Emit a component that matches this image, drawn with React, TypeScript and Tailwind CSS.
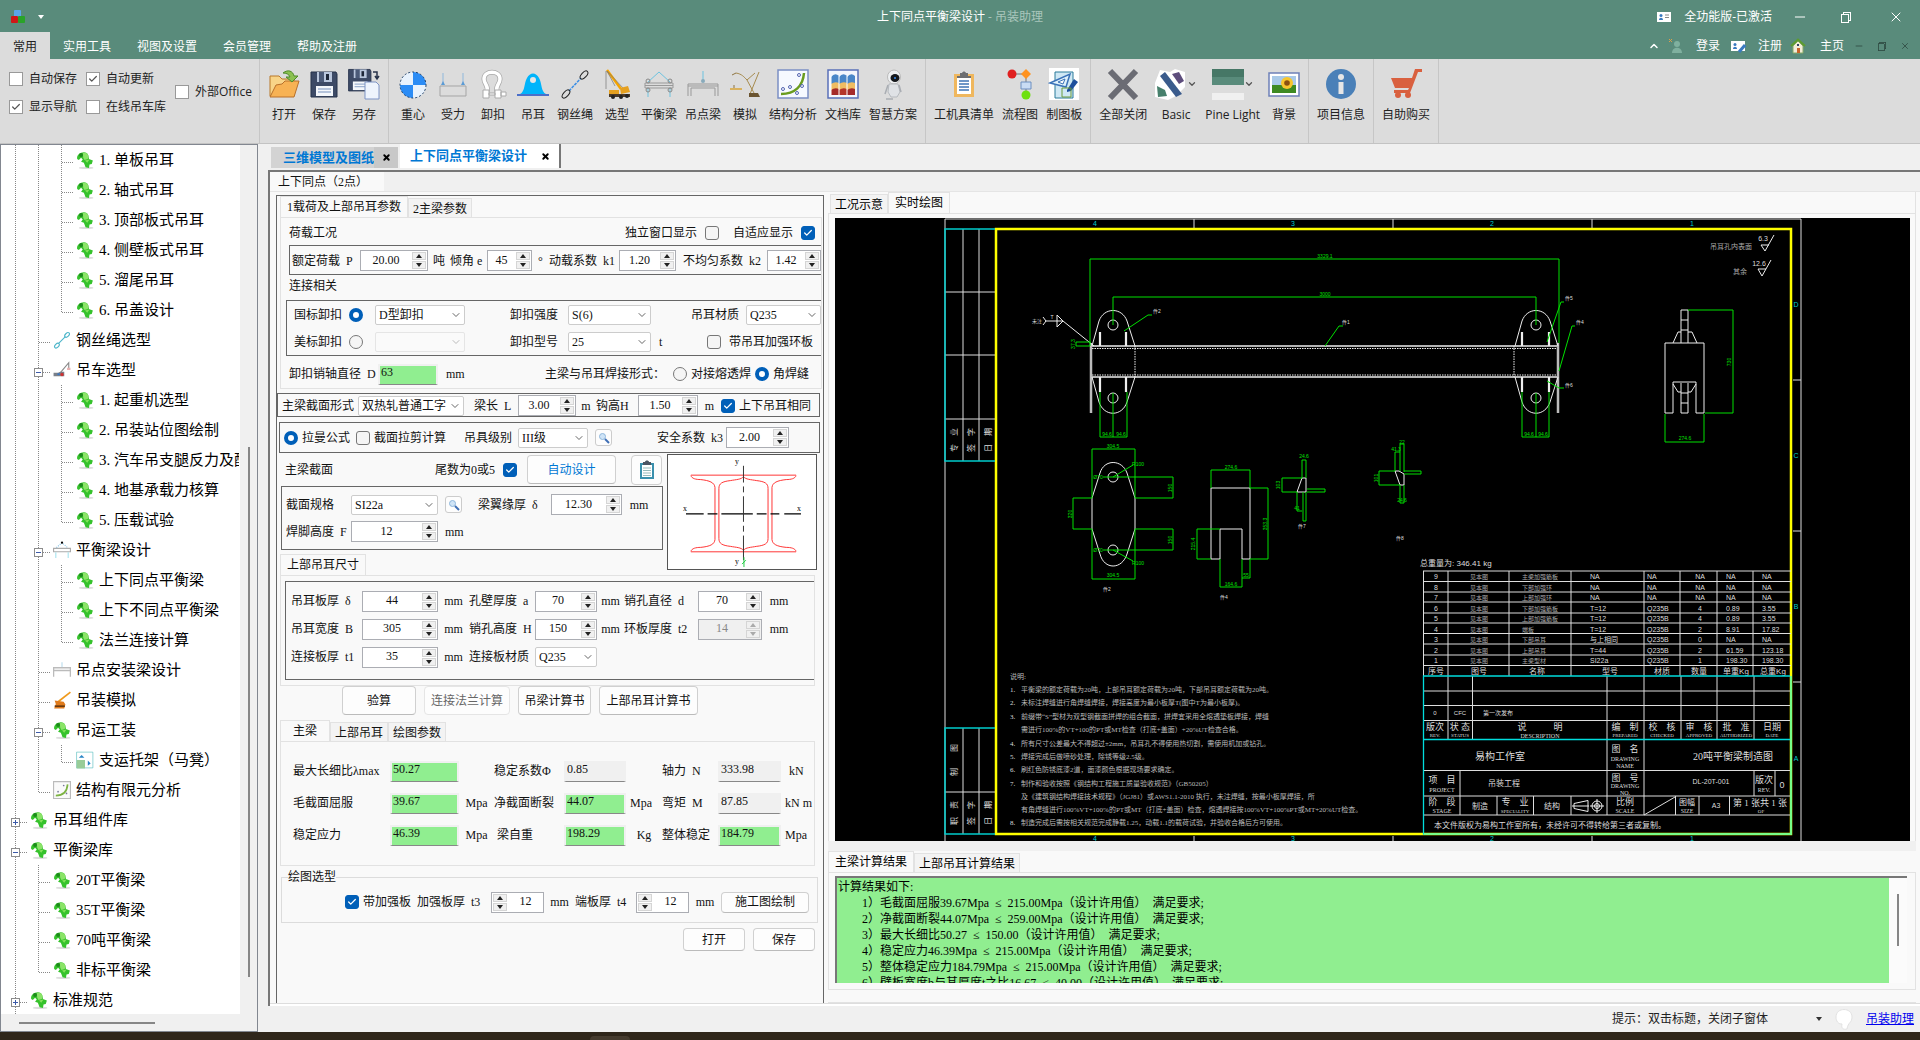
import { useId } from 'react';
import type { ReactNode } from 'react';
import { Check, ChevronDown, ChevronUp, Minus, X } from 'lucide-react';

/* ---------- ribbon icons (32 x 32 grid) ---------- */

const Svg = ({ children }: { children: ReactNode }) => (
  <svg viewBox="0 0 32 32" className="w-8 h-8" fill="none">{children}</svg>
);

const floppy = (
  <>
    <path d="M3 4h25l1 2v23H3z" fill="#3d4a66" stroke="#27324a" />
    <path d="M9 4h15v10H9z" fill="#b9c6dc" />
    <path d="M11 4h5v10h-5z" fill="#4b5a78" />
    <path d="M18 6h3v6h-3z" fill="#1d2638" />
    <path d="M8 18h17v10H8z" fill="#f4f7fb" />
    <path d="M10 21h13M10 24h13" stroke="#9fb3d1" strokeWidth="1.5" />
  </>
);

const icons: Record<string, ReactNode> = {
  open: (
    <Svg>
      <path d="M2 8h9l3 3h12v17H2z" fill="#f8d488" stroke="#b8782a" />
      <path d="M2 29 8 17l6-1 3-3h14l-5 16z" fill="#f7b254" stroke="#b8702a" />
      <path d="M15 5c5-4 10-2 11 3h4l-6 6-6-5h4c-1-3-4-4-7-4z" fill="#8cc152" stroke="#4f8a2b" />
    </Svg>
  ),
  save: <Svg>{floppy}</Svg>,
  saveAs: (
    <Svg>
      <g transform="translate(-2 -2) scale(.86)">{floppy}</g>
      <path d="M17 14h11l3 3v14H17z" fill="#eef4fd" stroke="#7d93c4" />
      <path d="M25 4h4v6m-2-2 2 3 2-3" stroke="#27324a" strokeWidth="1.5" />
    </Svg>
  ),
  center: (
    <Svg>
      <circle cx="16" cy="17" r="13" fill="#e8f2fd" />
      <path d="M16 17V4a13 13 0 0 1 13 13zM16 17v13A13 13 0 0 1 3 17z" fill="#2b8cf5" />
      <circle cx="16" cy="17" r="13" stroke="#1f3f66" strokeDasharray="2 2" />
    </Svg>
  ),
  force: (
    <Svg>
      <path d="M6 5v11M26 5v11" stroke="#8fb8dc" />
      <path d="M3 18h26v10H3z" stroke="#a5a5a5" />
      <path d="m4 17 2-4 2 4zM24 17l2-4 2 4z" fill="#5b9bd5" />
    </Svg>
  ),
  shackle: (
    <Svg>
      <path d="M10 24c2-6-3-8-3-13C7 2 23 2 23 11c0 5-5 7-3 13" stroke="#a9a9a9" strokeWidth="5" />
      <path d="M10 24c2-6-3-8-3-13C7 2 23 2 23 11c0 5-5 7-3 13" stroke="#fff" strokeWidth="3.500" />
      <path d="M6 22h6v8H6zM18 22h6v8h-6zM12 25h6v2h-6zM24 24h5v4h-5z" fill="#fff" stroke="#aaa" />
    </Svg>
  ),
  lug: (
    <Svg>
      <path d="M3 26c5-2 4-11 7-16 3-6 9-6 12 0 3 5 2 14 7 16z" fill="#00b4fb" />
      <circle cx="16" cy="12" r="3" fill="#e6e6e6" />
      <path d="M0 26h32v2H0z" fill="#4b6fc9" />
    </Svg>
  ),
  rope: (
    <Svg>
      <path d="m10 23 12-13" stroke="#3a8ee6" strokeWidth="1.5" strokeDasharray="3 1" />
      <ellipse cx="7" cy="26" rx="5" ry="2.5" transform="rotate(-48 7 26)" stroke="#222" />
      <ellipse cx="25" cy="7" rx="5" ry="2.5" transform="rotate(-48 25 7)" stroke="#222" />
    </Svg>
  ),
  crane: (
    <Svg>
      <path d="m6 2 14 19" stroke="#f5a400" strokeWidth="2.5" />
      <path d="M5 3v18M6 3l8 15M6 3l17 18" stroke="#777" strokeWidth=".7" />
      <path d="M8 22h10v4H8zM19 20l8-2 2 6-9 2z" fill="#e5a020" />
      <path d="M8 26h21v3H8z" fill="#4a3a2a" />
      <circle cx="12" cy="29" r="2" fill="#222" /><circle cx="20" cy="29" r="2" fill="#222" /><circle cx="26" cy="28" r="2" fill="#222" />
    </Svg>
  ),
  beam: (
    <Svg>
      <path d="M5 14 16 4l11 10M5 20v9M27 20v9" stroke="#6cc3e0" />
      <path d="M2 15h28v5H2zM2 17.5h28" stroke="#999" />
      <circle cx="5" cy="13" r="2" stroke="#888" /><circle cx="27" cy="13" r="2" stroke="#888" />
      <circle cx="5" cy="22" r="2" stroke="#888" /><circle cx="27" cy="22" r="2" stroke="#888" />
    </Svg>
  ),
  pointBeam: (
    <Svg>
      <path d="M16 3v11" stroke="#6cc3e0" /><circle cx="16" cy="13" r="2" fill="#8ab" />
      <path d="M1 16h30v12M1 16v12M4 28v-8h24v8M1 18h30" stroke="#999" />
    </Svg>
  ),
  simulate: (
    <Svg>
      <path d="M7 5c6 1 8 4 11 7l7 13M30 4l-9 22M18 12l8-7" stroke="#a68b4f" />
      <path d="M1 20h12v2H1z" fill="#d9b25f" /><path d="M5 17v3M7 5l-4 2" stroke="#8c7340" />
      <path d="M20 25h9l2 4H20z" fill="#6b5430" />
    </Svg>
  ),
  analysis: (
    <Svg>
      <path d="M1 2h30v28H1z" fill="#f6f9ff" stroke="#7b8fc4" strokeWidth="1.5" />
      <path d="M4 26c14 0 22-8 23-21" stroke="#6a9c1f" strokeWidth="2.5" />
      <g stroke="#5566b0"><circle cx="22" cy="7" r="1.5" /><circle cx="6" cy="21" r="1.5" /><circle cx="13" cy="19" r="1.5" /><circle cx="25" cy="18" r="1.5" /><circle cx="20" cy="25" r="1.5" /></g>
    </Svg>
  ),
  library: (
    <Svg>
      <path d="M1 2h30v28H1z" fill="#f4f6fd" stroke="#5a70b8" strokeWidth="1.5" />
      {[[4, '#a52a2a'], [12, '#b5352a'], [20, '#a52a2a']].map(([x, c]) => (
        <g key={x}>
          <path d={`M${x} 9q4-5 8-1v18H${x}z`} fill="#4a86c8" />
          <path d={`M${x} 16q4-3 8-1v11H${x}z`} fill="#f0bc62" />
          <path d={`M${x} 22q4-3 8-1v6H${x}z`} fill={c as string} />
          <path d={`M${x} 8v19`} stroke="#fff" />
        </g>
      ))}
    </Svg>
  ),
  robot: (
    <Svg>
      <ellipse cx="17" cy="9" rx="6.500" ry="7" fill="#eef0f2" stroke="#bbb" />
      <ellipse cx="18" cy="10" rx="4.5" ry="4" fill="#15181c" /><circle cx="18" cy="10" r="1" fill="#3b8ef0" />
      <path d="M12 16h9l2 8-3 5h-6l-3-5z" fill="#dfe2e6" stroke="#b5b9be" />
      <path d="m11 17-3 9M22 17l2 7M9 31h7" stroke="#a9adb3" strokeWidth="1.5" />
    </Svg>
  ),
  clipboard: (
    <Svg>
      <path d="M6 6h20v23H6z" fill="#efb75e" /><path d="M9 9h14v17H9z" fill="#fff" />
      <path d="M9 8h3V5h2c1-2 3-2 4 0h2v3h3v2H9z" fill="#6d6e71" />
      <path d="M11 13h10M11 16h10M11 19h10M11 22h10" stroke="#3f76b5" strokeWidth="1.3" />
    </Svg>
  ),
  flow: (
    <Svg>
      <path d="M8 6h14v20" stroke="#777" />
      <circle cx="8" cy="6" r="4.5" fill="#e02020" /><path d="m22 1 5 5-5 5-5-5z" fill="#ff9320" />
      <path d="M17 14h10v7H17z" fill="#c9dcf4" stroke="#6c8fc0" /><circle cx="22" cy="27" r="4.5" fill="#6fe010" />
    </Svg>
  ),
  board: (
    <Svg>
      <path d="M1 0h30v32H1z" fill="#fff" />
      <path d="M7 4h18v26H7z" fill="#cfe8f4" stroke="#2b7a99" />
      <path d="M2 15 22 6l-4 13z" fill="#dff1fb" stroke="#3a72b8" strokeWidth="1.5" /><path d="m10 14 7-3-2 5z" fill="#fff" stroke="#3a72b8" />
      <path d="m19 22 7-11 4 3-7 9-4 1z" fill="#1d4f9c" /><path d="M14 20h9v9h-9z" stroke="#6c9c3a" />
    </Svg>
  ),
  close: <Svg><path d="m3 3 26 27M29 3 3 30" stroke="#6b6c74" strokeWidth="6" /></Svg>,
  basic: (
    <Svg>
      <path d="M5 2 0 15v14l13 3 8-4 9-9V4L20 1l-5 3z" fill="#fff" />
      <path d="m5 8 5-4 17 22-6 3z" fill="#3a5b8c" /><path d="m17 6 7-2 5 9-5 3z" fill="#5d4d7c" /><path d="m2 18 8 4 2 6-9 1z" fill="#47806c" />
    </Svg>
  ),
  pine: (
    <Svg>
      <path d="M0 1h32v8H0z" fill="#467766" /><path d="M0 9h32v8H0z" fill="#598b7b" /><path d="M0 17h32v8H0z" fill="#dcdcdc" /><path d="M0 25h32v7H0z" fill="#f0f0f0" />
    </Svg>
  ),
  sunflower: (
    <Svg>
      <path d="M1 5h30v23H1z" fill="#fff" stroke="#6d80b8" strokeWidth="1.5" />
      <path d="M4 8h24v17H4z" fill="#a9c9e8" /><path d="M4 17h24v8H4z" fill="#3e8a22" />
      <circle cx="19" cy="15" r="6" fill="#f7c62e" /><circle cx="19" cy="15" r="2.8" fill="#8a5010" />
    </Svg>
  ),
  info: (
    <Svg>
      <circle cx="16" cy="16" r="15" fill="#4a80b8" /><circle cx="16" cy="9" r="3" fill="#e6e6e6" /><path d="M13.5 14h5v12h-5z" fill="#e6e6e6" />
    </Svg>
  ),
  cart: (
    <Svg>
      <path d="M1 10h21l3-9h7v3h-4l-8 21H4v-3h14l1-2H5z" fill="#d9603f" />
      <circle cx="8" cy="27" r="3" fill="#d9603f" /><circle cx="18" cy="27" r="3" fill="#d9603f" />
    </Svg>
  ),
};

const ribbonGroups: { icon: string; label: string; drop?: boolean }[][] = [
  [{ icon: 'open', label: '打开' }, { icon: 'save', label: '保存' }, { icon: 'saveAs', label: '另存' }],
  [
    { icon: 'center', label: '重心' }, { icon: 'force', label: '受力' }, { icon: 'shackle', label: '卸扣' },
    { icon: 'lug', label: '吊耳' }, { icon: 'rope', label: '钢丝绳' }, { icon: 'crane', label: '选型' },
    { icon: 'beam', label: '平衡梁' }, { icon: 'pointBeam', label: '吊点梁' }, { icon: 'simulate', label: '模拟' },
    { icon: 'analysis', label: '结构分析' }, { icon: 'library', label: '文档库' }, { icon: 'robot', label: '智慧方案' },
  ],
  [{ icon: 'clipboard', label: '工机具清单' }, { icon: 'flow', label: '流程图' }, { icon: 'board', label: '制图板' }],
  [
    { icon: 'close', label: '全部关闭' }, { icon: 'basic', label: 'Basic', drop: true },
    { icon: 'pine', label: 'Pine Light', drop: true }, { icon: 'sunflower', label: '背景' },
  ],
  [{ icon: 'info', label: '项目信息' }],
  [{ icon: 'cart', label: '自助购买' }],
];

/* ---------- small form controls ---------- */

function Tick({ label, checked = false, flat = false, before = false, wide = false }: { label: string; checked?: boolean; flat?: boolean; before?: boolean; wide?: boolean }) {
  return (
    <label className={`flex items-center whitespace-nowrap ${flat ? 'gap-[6px]' : before || wide ? 'gap-2' : 'gap-1'}`}>
      {before && <span>{label}</span>}
      <span className="relative size-[14px] shrink-0">
        <input
          type="checkbox"
          defaultChecked={checked}
          className={`block appearance-none size-[14px] border ${flat ? 'bg-white border-[#999]' : 'rounded-[3px] bg-[#f5f5f5] border-[#777] checked:bg-[#005fb8] checked:border-[#005fb8]'}`}
        />
        {checked && <Check className={`absolute inset-0 size-[14px] p-[2px] pointer-events-none ${flat ? 'text-[#555]' : 'text-white'}`} strokeWidth={3} />}
      </span>
      {!before && <span>{label}</span>}
    </label>
  );
}

function Radio({ name, label, checked = false, before = false }: { name: string; label: string; checked?: boolean; before?: boolean }) {
  return (
    <label className={`flex items-center whitespace-nowrap ${before ? 'gap-[7px]' : 'gap-1'}`}>
      {before && <span>{label}</span>}
      <input
        type="radio"
        name={name}
        defaultChecked={checked}
        className="appearance-none size-[14px] shrink-0 rounded-full border border-[#777] bg-[#f5f5f5] checked:bg-white checked:border-4 checked:border-[#005fb8]"
      />
      {!before && <span>{label}</span>}
    </label>
  );
}

function Spin({ id, value, disabled = false, left = false }: { id: string; value: string; disabled?: boolean; left?: boolean }) {
  return (
    <div className={`flex h-[21px] w-full min-w-0 border border-[#abadb3] ${left ? 'flex-row-reverse' : ''} ${disabled ? 'bg-[#f0f0f0] text-[#888]' : 'bg-white'}`}>
      <input id={id} defaultValue={value} disabled={disabled} className="w-0 flex-1 text-center leading-4 pb-[2px] bg-transparent" />
      <div className="flex flex-col w-[14px] my-px mx-px gap-px">
        <button aria-label="增加" disabled={disabled} className="flex-1 flex items-center justify-center bg-[#f0f0f0] border border-[#d5d5d5]">
          <svg viewBox="0 0 6 4" className="w-[6px] h-1"><path d="M0 4h6L3 0z" fill={disabled ? '#aaa' : '#222'} /></svg>
        </button>
        <button aria-label="减少" disabled={disabled} className="flex-1 flex items-center justify-center bg-[#f0f0f0] border border-[#d5d5d5]">
          <svg viewBox="0 0 6 4" className="w-[6px] h-1"><path d="M0 0h6L3 4z" fill={disabled ? '#aaa' : '#222'} /></svg>
        </button>
      </div>
    </div>
  );
}

function Combo({ id, value, disabled = false }: { id: string; value: string; disabled?: boolean }) {
  return (
    <div className="relative w-full min-w-0">
      <select id={id} disabled={disabled} className={`block appearance-none w-full h-5 pl-[3px] pr-4 border rounded-[2px] leading-4 overflow-hidden ${disabled ? 'bg-[#fafafa] border-[#e5e5e5]' : 'bg-white border-[#ccc]'}`}>
        <option>{value}</option>
      </select>
      <ChevronDown className={`absolute right-[3px] top-1 size-3 pointer-events-none ${disabled ? 'text-[#bbb]' : 'text-[#666]'}`} strokeWidth={2} />
    </div>
  );
}

function Output({ id, value, good = true }: { id: string; value: string; good?: boolean }) {
  return (
    <input
      id={id}
      readOnly
      value={value}
      className={`w-full min-w-0 h-[21px] pl-px pb-1 leading-4 border-2 border-[#f0f0f0] border-b border-b-[#888] ${good ? 'bg-[#90ee90]' : 'bg-[#f0f0f0]'}`}
    />
  );
}

const L = ({ htmlFor, children }: { htmlFor?: string; children: ReactNode }) => (
  <label htmlFor={htmlFor} className="whitespace-pre">{children}</label>
);

const U = ({ children }: { children: ReactNode }) => <span className="text-center whitespace-pre">{children}</span>;

const PushButton = ({ children, disabled = false }: { children: ReactNode; disabled?: boolean }) => (
  <button disabled={disabled} className={`w-full h-full rounded-[4px] border bg-[#fdfdfd] ${disabled ? 'border-[#e5e5e5] text-[#666]' : 'border-[#d0d0d0] border-b-[#bbb]'}`}>
    {children}
  </button>
);

const Tab = ({ children, active = false }: { children: ReactNode; active?: boolean }) => (
  <button
    role="tab"
    aria-selected={active}
    className={`whitespace-nowrap border border-b-0 border-[#e2e2e2] ${active ? 'h-[21px] px-[6px] pb-px bg-[#f9f9f9]' : 'h-[19px] px-1 pt-px bg-[#f3f3f3]'}`}
  >
    {children}
  </button>
);

const Lens = () => (
  <button aria-label="查询" className="size-[17px] rounded-[3px] border border-[#ccc] bg-[#fdfdfd] flex items-center justify-center">
    <svg viewBox="0 0 12 12" className="size-3"><circle cx="4.500" cy="4.500" r="3" fill="#cfe4f7" stroke="#8fb7dc" /><path d="m7 7 4 4" stroke="#3f6fb5" strokeWidth="2" /></svg>
  </button>
);

/* ---------- left tree ---------- */

// guides: '|' line passes, 't' branch, 'l' last branch, '-'/'+' expander
const treeRows: [string, string, string][] = [
  ['||t', 'puzzle', '1. 单板吊耳'],
  ['||t', 'puzzle', '2. 轴式吊耳'],
  ['||t', 'puzzle', '3. 顶部板式吊耳'],
  ['||t', 'puzzle', '4. 侧壁板式吊耳'],
  ['||t', 'puzzle', '5. 溜尾吊耳'],
  ['||l', 'puzzle', '6. 吊盖设计'],
  ['|t', 'rope', '钢丝绳选型'],
  ['|-', 'crane', '吊车选型'],
  ['||t', 'puzzle', '1. 起重机选型'],
  ['||t', 'puzzle', '2. 吊装站位图绘制'],
  ['||t', 'puzzle', '3. 汽车吊支腿反力及配'],
  ['||t', 'puzzle', '4. 地基承载力核算'],
  ['||l', 'puzzle', '5. 压载试验'],
  ['|-', 'beam', '平衡梁设计'],
  ['||t', 'puzzle', '上下同点平衡梁'],
  ['||t', 'puzzle', '上下不同点平衡梁'],
  ['||l', 'puzzle', '法兰连接计算'],
  ['|t', 'pointBeam', '吊点安装梁设计'],
  ['|t', 'lift', '吊装模拟'],
  ['|-', 'puzzle', '吊运工装'],
  ['||l', 'frame', '支运托架（马凳）'],
  ['|l', 'analysis', '结构有限元分析'],
  ['+', 'puzzle', '吊耳组件库'],
  ['-', 'puzzle', '平衡梁库'],
  ['|t', 'puzzle', '20T平衡梁'],
  ['|t', 'puzzle', '35T平衡梁'],
  ['|t', 'puzzle', '70吨平衡梁'],
  ['|l', 'puzzle', '非标平衡梁'],
  ['+', 'puzzle', '标准规范'],
];

function TreeIcon({ name }: { name: string }) {
  return (
    <svg viewBox="0 0 32 32" className="size-[18px] shrink-0" fill="none">
      {name === 'puzzle' && (
        <>
          <ellipse cx="18" cy="30" rx="13" ry="2" fill="#ddd" />
          <path d="M2 14c-1-5 2-9 7-11 6-2 11-1 13 5l1 6 7 3-2 6-4 1-1 6-6-1-3-8-5-2 3-4-3-3-4 4z" fill="#36c22c" />
          <path d="M12 4c5-2 9 0 10 5l-1 5-6 2-2-4z" fill="#8be468" />
          <circle cx="9" cy="7" r="3.500" fill="#1d8a1b" />
          <path d="m16 17 8-2-4 6z" fill="#a5ee6d" opacity=".7" />
        </>
      )}
      {name === 'rope' && (
        <g stroke="#4bb5c9" strokeWidth="2"><path d="m10 22 12-12" /><ellipse cx="7" cy="26" rx="5" ry="3" transform="rotate(-45 7 26)" /><ellipse cx="25" cy="7" rx="5" ry="3" transform="rotate(-45 25 7)" /></g>
      )}
      {name === 'crane' && (
        <>
          <path d="m12 22 16-19v11" stroke="#888" strokeWidth="2" /><path d="M25 12h6v4h-6z" fill="#e8b0b0" />
          <path d="M1 21h8l4-2h7v8H1z" fill="#7a8089" /><circle cx="16" cy="24" r="3" fill="#c33" /><path d="M8 22h4v3H8z" fill="#37c" />
        </>
      )}
      {name === 'beam' && (
        <>
          <path d="m6 12 10-9 10 9" stroke="#8cc7e8" strokeDasharray="2 2" strokeWidth="2" /><circle cx="16" cy="3" r="2" fill="#000" />
          <path d="M1 13h30v6H1z" stroke="#aaa" strokeWidth="2" /><path d="M5 20v10M27 20v10" stroke="#a8e4f0" strokeWidth="2" />
        </>
      )}
      {name === 'pointBeam' && <><path d="M16 2v9" stroke="#bde" strokeWidth="2" /><path d="M1 28V12h30v16M1 17h30" stroke="#bbb" strokeWidth="2.500" /></>}
      {name === 'lift' && <><path d="M8 20 31 2" stroke="#f09a1c" strokeWidth="3" /><path d="m3 17 16 2 3 5-2 7H2l3-8z" fill="#e07b1c" /><path d="M3 27h18" stroke="#6a3a10" strokeWidth="3" /></>}
      {name === 'frame' && <><path d="M1 2h29v28H1z" fill="#fff" stroke="#43b5b8" /><path d="M1 16h15v15H1z" fill="#98cc98" /><path d="m5 12 5-5 5 5zM21 17v9l5-4z" fill="#2a86c6" /></>}
      {name === 'analysis' && <><path d="M1 1h30v30H1z" fill="#fafafa" stroke="#bbb" strokeWidth="2" /><path d="M5 26c13 0 20-8 21-20" stroke="#7cb342" strokeWidth="3" /><circle cx="9" cy="19" r="1.500" fill="#779" /><circle cx="19" cy="8" r="1.500" fill="#779" /><circle cx="24" cy="22" r="1.500" fill="#779" /></>}
    </svg>
  );
}

function Guide({ kind }: { kind: string }) {
  return (
    <svg viewBox="0 0 23 30" className="w-[23px] h-[30px] shrink-0" fill="none" stroke="#888" strokeDasharray="1 1" shapeRendering="crispEdges">
      <path d={kind === 'l' ? 'M11.500 0V17' : 'M11.500 0V30'} />
      {kind !== '|' && <path d="M12 17.500H23" />}
      {(kind === '-' || kind === '+') && (
        <g strokeDasharray="none">
          <rect x="7.500" y="13.500" width="8" height="8" fill="#fff" stroke="#8c8c8c" />
          <path d={kind === '+' ? 'M9 17.500h5M11.500 15v5' : 'M9 17.500h5'} stroke="#3c5aa8" />
        </g>
      )}
    </svg>
  );
}

function Sidebar() {
  return (
    <aside className="w-[258px] shrink-0 flex flex-col border border-[#828790] bg-[#f0f0f0] overflow-hidden">
      <div className="flex-1 min-h-0 flex">
        <ul className="w-[239px] overflow-hidden bg-white pl-[3px] pr-px text-[15px] leading-[30px] text-black">
          {treeRows.map(([guides, icon, text]) => (
            <li key={text} className="flex items-center h-[30px] whitespace-nowrap overflow-hidden">
              {guides.split('').map((g, i) => <Guide key={i} kind={g} />)}
              <span className="ml-[3px] mr-[5px]"><TreeIcon name={icon} /></span>
              <span>{text}</span>
            </li>
          ))}
        </ul>
        <div className="flex-1 flex justify-center pt-[302px]">
          <div className="w-[2px] h-[530px] bg-[#868686]" />
        </div>
      </div>
      <div className="h-[17px] flex items-center pl-[18px]">
        <div className="w-[136px] h-[2px] bg-[#868686]" />
      </div>
    </aside>
  );
}

/* ---------- title bar and ribbon ---------- */

const House = () => (
  <svg viewBox="0 0 16 16" className="size-4"><path d="M3 8v7h10V8L8 3z" fill="#f3ecd8" stroke="#8a6" /><path d="m1 8 7-6.500L15 8" fill="none" stroke="#5d9c2f" strokeWidth="2" /><path d="M7 10h3v5H7z" fill="#c8642a" /><path d="M7 6h2v2H7z" fill="#346" /></svg>
);

const Card = ({ pen = false }: { pen?: boolean }) => (
  <svg viewBox="0 0 16 14" className="w-4 h-[14px]"><path d="M1 2h14v10H1z" fill="#fff" /><circle cx="5" cy="5.500" r="1.500" fill="#3a7ac0" /><path d="M3 10c0-3 4-3 4 0z" fill="#3a7ac0" />{pen ? <path d="m9 13 6-7" stroke="#3a7ac0" strokeWidth="3" /> : <path d="M9 5h4M9 7.500h4" stroke="#888" />}</svg>
);

const Restore = ({ className }: { className: string }) => (
  <svg viewBox="0 0 12 12" className={className} fill="none" stroke="currentColor" shapeRendering="crispEdges"><path d="M1.500 3.500h7v8h-7zM3.500 3V1.500h7v8H9" /></svg>
);

function TitleBar() {
  return (
    <header className="bg-[#598b7b] text-white text-xs">
      <div className="h-8 pt-px grid grid-cols-[1fr_auto_1fr] items-center">
        <div className="flex items-center gap-3 pl-[10px]">
          <svg viewBox="0 0 16 14" className="w-4 h-[14px]"><rect x="4" y="0" width="7" height="7" rx="1" fill="#5aa6e8" /><rect x="1" y="6" width="7" height="7" rx="1" fill="#cf1717" /><rect x="8" y="6" width="7" height="7" rx="1" fill="#29a329" /></svg>
          <svg viewBox="0 0 6 4" className="w-[6px] h-1"><path d="M0 0h6L3 4z" fill="#fff" /></svg>
        </div>
        <h1 className="pt-px">上下同点平衡梁设计 <span className="text-[#a9c6bc]">- 吊装助理</span></h1>
        <div className="flex items-center justify-end">
          <Card />
          <span className="ml-3 mr-5 pt-px">全功能版-已激活</span>
          <button aria-label="最小化" className="w-12 flex items-center"><Minus className="size-4" strokeWidth={1.5} /></button>
          <button aria-label="还原" className="w-12 flex items-center"><Restore className="size-3" /></button>
          <button aria-label="关闭" className="w-8 flex items-center"><X className="size-4" strokeWidth={1.5} /></button>
        </div>
      </div>
      <nav className="h-[27px] flex items-stretch">
        {['常用', '实用工具', '视图及设置', '会员管理', '帮助及注册'].map((t, i) => (
          <button key={t} role="tab" className={`px-[13px] pt-[2px] ${i === 0 ? 'bg-[#dcdcdc] text-[#222]' : ''}`}>{t}</button>
        ))}
        <div className="ml-auto flex items-center">
          <ChevronUp className="size-3 mr-2" strokeWidth={3} />
          <svg viewBox="0 0 16 16" className="size-4 mr-3"><circle cx="9" cy="6" r="3" fill="#7fb09f" /><path d="M4 15c0-7 10-7 10 0z" fill="#7fb09f" /><path d="m1 1 3 3m0-3L1 4" stroke="#d9a04a" /></svg>
          <a href="#login" className="mr-[10px]">登录</a>
          <Card pen />
          <a href="#register" className="ml-3 mr-2">注册</a>
          <House />
          <a href="#home" className="ml-[14px] mr-[10px]">主页</a>
          <span className="flex items-center gap-[13px] text-[#2f4a42] pr-[10px]">
            <Minus className="size-[10px]" /><Restore className="size-[10px]" /><X className="size-[10px]" />
          </span>
        </div>
      </nav>
    </header>
  );
}

function Ribbon() {
  return (
    <div className="h-[85px] flex bg-[#dcdcdc] border-b border-[#c3c3c3] text-xs text-[#222]">
      <div className="w-[260px] flex items-start pl-[9px] border-r border-[#c6c6c6]">
        <div className="grid grid-cols-[77px_89px] leading-4 gap-y-3 pt-3">
          <Tick flat label="自动保存" /><Tick flat checked label="自动更新" />
          <Tick flat checked label="显示导航" /><Tick flat label="在线吊车库" />
        </div>
        <div className="pt-[25px] leading-4"><Tick flat label="外部Office" /></div>
      </div>
      {ribbonGroups.map((group, gi) => (
        <div key={gi} className="flex px-1 border-r border-[#c6c6c6]">
          {group.map((item) => (
            <button key={item.label} className="flex flex-col items-center pt-[9px] min-w-10 px-1">
              <span className="flex items-center">
                {icons[item.icon]}
                {item.drop && <ChevronDown className="size-[10px] text-[#555]" strokeWidth={3} />}
              </span>
              <span className="mt-[7px] leading-4 whitespace-nowrap">{item.label}</span>
            </button>
          ))}
        </div>
      ))}
    </div>
  );
}

/* ---------- parameter form ---------- */

function SectionView() {
  return (
    <svg viewBox="0 0 150 116" className="w-[150px] h-[116px] mt-px bg-white border border-[#555]" fill="none">
      <g stroke="#f33">
        <path d="M23 20.500h107M23 98.500h107" />
        <path d="M23 21c1 3 5 4 10 4 9 1 14 3 14.500 8v53c-.5 5-5 7-14.500 8-5 0-9 1-10 4M76.500 22c-2 3-8 3-13 4-9 1-12 3-12 8v51c0 5 3 7 12 8 5 1 11 1 13 4" />
        <path d="M76.500 22c2 3 8 3 13 4 9 1 12 3 12 8v51c0 5-3 7-12 8-5 1-11 1-13 4M130 21c-1 3-5 4-10 4-9 1-14 3-14.500 8v53c.5 5 5 7 14.500 8 5 0 9 1 10 4" />
      </g>
      <path d="M18 60h18m4 0h10m4 0h32m4 0h10m4 0h9m5 0h17" stroke="#000" strokeWidth="1.300" />
      <path d="M76.500 11v17m0 4v6m0 4v26m0 4v6m0 4v25" stroke="#333" />
      <path d="M77 104v10m-2-3 4-4" stroke="#2c4" />
      <g fill="#000" fontSize="8"><text x="68" y="9">y</text><text x="68" y="111">y</text><text x="15" y="57">x</text><text x="131" y="57">x</text></g>
    </svg>
  );
}

function ParameterForm() {
  const uid = useId();
  const k = (s: string) => `${uid}${s}`;
  const box = 'border border-[#666]';
  const openBox = 'border border-r-0 border-[#666]';
  return (
    <form className="w-[548px] shrink-0 mt-[3px] flex flex-col border border-b-0 border-[#666] text-xs leading-4 text-[#111]" onSubmit={(e) => e.preventDefault()}>
      <div role="tablist" className="h-[21px] pl-[3px] flex items-end"><Tab active>1载荷及上部吊耳参数</Tab><Tab>2主梁参数</Tab></div>

      <div className="mx-[3px] mr-px h-[172px] border border-[#e2e2e2]">
        <div className="h-[27px] pt-[3px] pl-2 pr-[6px] flex items-center">
          <span className="flex-1">荷载工况</span>
          <div className="flex gap-[14px]"><Tick before label="独立窗口显示" /><Tick before checked label="自适应显示" /></div>
        </div>
        <div className={`ml-2 h-[30px] pt-px pl-[2px] grid grid-cols-[68px_68px_22px_37px_45px_17px_70px_57px_91px_1fr] items-center ${openBox}`}>
          <L htmlFor={k('P')}>额定荷载  P</L><Spin id={k('P')} value="20.00" />
          <U>吨</U><L htmlFor={k('e')}>倾角 e</L><Spin id={k('e')} value="45" />
          <U>°</U><L htmlFor={k('k1')}>动载系数  k1</L><Spin id={k('k1')} value="1.20" />
          <span className="pl-[7px]"><L htmlFor={k('k2')}>不均匀系数  k2</L></span><Spin id={k('k2')} value="1.42" />
        </div>
        <div className="h-[25px] pl-2 pt-[3px]">连接相关</div>
        <div className={`ml-[5px] h-[56px] pl-[7px] grid grid-cols-[81px_90px_45px_58px_83px_40px_55px_1fr] grid-rows-2 items-center ${openBox}`}>
          <Radio before checked name={k('std')} label="国标卸扣" /><Combo id={k('gb')} value="D型卸扣" /><span />
          <L htmlFor={k('grade')}>卸扣强度</L><Combo id={k('grade')} value="S(6)" /><span />
          <L htmlFor={k('material')}>吊耳材质</L><Combo id={k('material')} value="Q235" />
          <Radio before name={k('std')} label="美标卸扣" /><Combo id={k('us')} value="" disabled /><span />
          <L htmlFor={k('model')}>卸扣型号</L><Combo id={k('model')} value="25" /><span className="pl-2">t</span>
          <div className="col-span-2 flex justify-end pr-[8px]"><Tick wide label="带吊耳加强环板" /></div>
        </div>
        <div className="h-[33px] pt-[3px] pl-2 pr-3 flex items-center">
          <span className="w-[89px]"><L htmlFor={k('D')}>卸扣销轴直径  D</L></span>
          <span className="w-[60px] flex"><Output id={k('D')} value="63" /></span>
          <span className="ml-2 mr-auto">mm</span>
          <span className="mr-2">主梁与吊耳焊接形式：</span>
          <Radio name={k('weld')} label="对接熔透焊" /><span className="ml-1"><Radio checked name={k('weld')} label="角焊缝" /></span>
        </div>
      </div>

      <div className={`mt-[4px] mr-[3px] h-6 pt-px pl-1 grid grid-cols-[76px_106px_10px_44px_58px_20px_42px_60px_23px_1fr] items-center ${box}`}>
        <L htmlFor={k('section')}>主梁截面形式</L><Combo id={k('section')} value="双热轧普通工字" /><span />
        <L htmlFor={k('L')}>梁长  L</L><Spin id={k('L')} value="3.00" /><U>m</U>
        <L htmlFor={k('H')}>钩高H</L><Spin id={k('H')} value="1.50" /><U>m</U><Tick checked label="上下吊耳相同" />
      </div>
      <div className={`mt-[5px] ml-[2px] mr-[3px] h-[31px] pl-1 grid grid-cols-[72px_108px_54px_70px_7px_62px_69px_63px] items-center ${box}`}>
        <Radio checked name={k('formula')} label="拉曼公式" /><Tick label="截面拉剪计算" />
        <L htmlFor={k('level')}>吊具级别</L><Combo id={k('level')} value="III级" /><span /><Lens />
        <L htmlFor={k('k3')}>安全系数  k3</L><Spin id={k('k3')} value="2.00" />
      </div>

      <div className="h-[122px] flex justify-between pr-[6px]">
        <div className="w-[386px] flex flex-col">
          <div className="h-[33px] pl-2 grid grid-cols-[150px_92px_89px_15px_31px] items-center">
            <span>主梁截面</span><Tick before checked label="尾数为0或5" />
            <span className="h-[29px] text-[#0078d4]"><PushButton>自动设计</PushButton></span><span />
            <button aria-label="复制" className="h-[30px] rounded-[4px] border border-[#d0d0d0] bg-[#fdfdfd] flex items-center justify-center">
              <svg viewBox="0 0 16 20" className="w-4 h-5"><path d="M1 3h14v16H1z" fill="#3a90ad" /><path d="M3 5h10v12H3z" fill="#fff" /><path d="M4 2h2c0-2 4-2 4 0h2v3H4z" fill="#4b5563" /><path d="M4 8h8M4 10.500h8M4 13h8M4 15.500h8" stroke="#9bb" /></svg>
            </button>
          </div>
          <div className={`ml-1 h-16 pl-1 py-1 grid grid-cols-[65px_87px_7px_33px_73px_71px_34px] grid-rows-2 items-center ${box}`}>
            <L htmlFor={k('spec')}>截面规格</L><Combo id={k('spec')} value="SI22a" /><span /><Lens />
            <L htmlFor={k('flange')}>梁翼缘厚  δ</L><Spin id={k('flange')} value="12.30" /><U>mm</U>
            <L htmlFor={k('F')}>焊脚高度  F</L><Spin id={k('F')} value="12" /><span /><span>mm</span>
          </div>
          <div role="tablist" className="flex-1 pl-[3px] flex items-end"><Tab active>上部吊耳尺寸</Tab></div>
        </div>
        <SectionView />
      </div>

      <div className="ml-[3px] mr-[8px] h-[111px] pl-1 pt-[5px] border border-[#e2e2e2]">
        <div className={`h-[99px] pt-1 pl-[5px] grid grid-cols-[71px_76px_31px_66px_62px_27px_74px_64px_34px] grid-rows-[30px_26px_30px] items-center ${openBox}`}>
          <L htmlFor={k('t')}>吊耳板厚  δ</L><Spin id={k('t')} value="44" /><U>mm</U>
          <L htmlFor={k('a')}>孔壁厚度  a</L><Spin id={k('a')} value="70" /><U>mm</U>
          <L htmlFor={k('d')}>销孔直径  d</L><Spin id={k('d')} value="70" /><U>mm</U>
          <L htmlFor={k('B')}>吊耳宽度  B</L><Spin id={k('B')} value="305" /><U>mm</U>
          <L htmlFor={k('h')}>销孔高度  H</L><Spin id={k('h')} value="150" /><U>mm</U>
          <L htmlFor={k('t2')}>环板厚度  t2</L><Spin id={k('t2')} value="14" disabled /><U>mm</U>
          <L htmlFor={k('t1')}>连接板厚  t1</L><Spin id={k('t1')} value="35" /><U>mm</U>
          <L htmlFor={k('plate')}>连接板材质</L><Combo id={k('plate')} value="Q235" />
        </div>
      </div>

      <div className="h-[29px] pl-[65px] grid grid-cols-[74px_86px_73px_99px] gap-2">
        <PushButton>验算</PushButton><PushButton disabled>连接法兰计算</PushButton><PushButton>吊梁计算书</PushButton><PushButton>上部吊耳计算书</PushButton>
      </div>

      <div role="tablist" className="h-[26px] pl-[3px] flex items-end"><Tab active>主梁　</Tab><Tab>上部吊耳</Tab><Tab>绘图参数</Tab></div>
      <div className="ml-[3px] mr-[8px] h-[125px] pl-3 pt-[13px] border border-[#e2e2e2]">
        <div className="grid grid-cols-[97px_69px_35px_70px_62px_36px_56px_63px_1fr] auto-rows-[32px] items-center">
          <L htmlFor={k('r1')}>最大长细比λmax</L><Output id={k('r1')} value="50.27" /><span />
          <L htmlFor={k('r2')}>稳定系数Φ</L><Output id={k('r2')} value="0.85" good={false} /><span />
          <L htmlFor={k('r3')}>轴力  N</L><Output id={k('r3')} value="333.98" good={false} /><span className="pl-2">kN</span>
          <L htmlFor={k('r4')}>毛截面屈服</L><Output id={k('r4')} value="39.67" /><U>Mpa</U>
          <L htmlFor={k('r5')}>净截面断裂</L><Output id={k('r5')} value="44.07" /><span className="pl-1">Mpa</span>
          <L htmlFor={k('r6')}>弯矩  M</L><Output id={k('r6')} value="87.85" good={false} /><span className="pl-1">kN m</span>
          <L htmlFor={k('r7')}>稳定应力</L><Output id={k('r7')} value="46.39" /><U>Mpa</U>
          <L htmlFor={k('r8')}> 梁自重</L><Output id={k('r8')} value="198.29" /><U>Kg</U>
          <L htmlFor={k('r9')}>整体稳定</L><Output id={k('r9')} value="184.79" /><span className="pl-1">Mpa</span>
        </div>
      </div>

      <fieldset className="mt-[3px] ml-1 mr-[5px] h-[54px] border border-[#dcdcdc]">
        <legend className="ml-[6px]">绘图选型</legend>
        <div className="h-[34px] pl-[63px] grid grid-cols-[72px_74px_53px_31px_61px_53px_32px_88px] items-center">
          <Tick checked label="带加强板" />
          <L htmlFor={k('t3')}>加强板厚  t3</L><Spin left id={k('t3')} value="12" /><U>mm</U>
          <L htmlFor={k('t4')}>端板厚  t4</L><Spin left id={k('t4')} value="12" /><U>mm</U>
          <span className="h-[21px]"><PushButton>施工图绘制</PushButton></span>
        </div>
      </fieldset>
      <div className="mt-[5px] mr-[8px] h-[23px] flex justify-end gap-2">
        <span className="w-[62px]"><PushButton>打开</PushButton></span><span className="w-[62px]"><PushButton>保存</PushButton></span>
      </div>
    </form>
  );
}

/* ---------- CAD sheet ---------- */

type TProps = { x: number; y: number; s?: number; c?: string; a?: 'start' | 'middle' | 'end'; r?: boolean; children: ReactNode };

const T = ({ x, y, s = 7, c = '#ddd', a = 'middle', r, children }: TProps) => (
  <text x={x} y={y} dy="0.35em" fontSize={s} fill={c} textAnchor={a} transform={r ? `rotate(-90 ${x} ${y})` : undefined}>{children}</text>
);

const GREEN = '#00e000';

const dims: [number, number, string, boolean?][] = [
  [1325, 256, '3329.1'], [1325, 294, '3000'], [1073, 344, '37.3', true],
  [1107, 434, '94.6'], [1121, 434, '94.6'], [1529, 434, '94.6'], [1543, 434, '94.6'],
  [1729, 362, '730', true], [1685, 438, '274.6'], [1113, 446, '304.5'], [1113, 575, '304.5'],
  [1070, 514, '320', true], [1170, 488, '150', true], [1170, 540, '150', true],
  [1231, 467, '274.6'], [1265, 524, '353.3', true], [1193, 544, '215.4', true], [1231, 584, '164.6'], [1246, 575, '55'],
  [1304, 456, '24.6'], [1278, 485, '103', true], [1297, 508, '41'], [1402, 442, '22'], [1396, 449, '41.3'], [1376, 478, '101', true], [1402, 500, '24.6'],
  [1098, 477, 'Ø70'], [1098, 550, 'Ø70'], [1138, 464, 'R100'], [1138, 563, 'R100'],
];

const marks: [number, number, string][] = [
  [1157, 311, '件2'], [1346, 322, '件1'], [1569, 298, '件5'], [1580, 322, '件4'], [1569, 385, '件6'],
  [1107, 589, '件2'], [1224, 597, '件4'], [1302, 526, '件7'], [1400, 538, '件8'], [1037, 321, '未注'], [1052, 317, 'T'],
];

const notes: [number, string, string][] = [
  [690, '1.', '平衡梁的额定荷载为20吨，上部吊耳额定荷载为20吨，下部吊耳额定荷载为20吨。'],
  [703, '2.', '未标注焊缝进行角焊缝焊接，焊接高度为最小板厚T(图中T为最小板厚)。'],
  [717, '3.', '前缀带“S”型材为双型钢截面拼焊的组合截面，拼焊宜采用全熔透垫板焊接，焊缝'],
  [730, '', '需进行100%的VT+100的PT或MT检查（打底+盖面）+20%UT检查合格。'],
  [744, '4.', '所有尺寸公差最大不得超过±2mm，吊耳孔不得使用热切割，需使用机加或钻孔。'],
  [757, '5.', '焊接完成后做喷砂处理，除锈等级2.5级。'],
  [770, '6.', '刷红色防锈底漆2道，面漆颜色根据现场要求确定。'],
  [784, '7.', '制作和验收按照《钢结构工程施工质量验收规范》（GB50205）'],
  [797, '', '及《建筑钢结构焊接技术规程》（JGJ81）或AWS1.1-2010 执行，未注焊缝，按最小板厚焊接，所'],
  [810, '', '有角焊缝进行100%VT+100%的PT或MT（打底+盖面）检查，熔透焊接按100%VT+100%PT或MT+20%UT检查。'],
  [823, '8.', '制造完成后需按相关规范完成静载1.25，动载1.1的载荷试验，并验收合格后方可使用。'],
];

const bom = [
  ['9', '见本图', '主梁加强筋板', 'NA', 'NA', 'NA', 'NA', 'NA'],
  ['8', '见本图', '下部加强环', 'NA', 'NA', 'NA', 'NA', 'NA'],
  ['7', '见本图', '上部加强环', 'NA', 'NA', 'NA', 'NA', 'NA'],
  ['6', '见本图', '下部加强筋板', 'T=12', 'Q235B', '4', '0.89', '3.55'],
  ['5', '见本图', '上部加强筋板', 'T=12', 'Q235B', '4', '0.89', '3.55'],
  ['4', '见本图', '端板', 'T=12', 'Q235B', '2', '8.91', '17.82'],
  ['3', '见本图', '下部吊耳', '与上相同', 'Q235B', '0', 'NA', 'NA'],
  ['2', '见本图', '上部吊耳', 'T=44', 'Q235B', '2', '61.59', '123.18'],
  ['1', '见本图', '主梁型材', 'SI22a', 'Q235B', '1', '198.30', '198.30'],
];
const bomX = [1436, 1479, 1522, 1590, 1647, 1700, 1726, 1762];
const bomHead: [number, string][] = [[1436, '序号'], [1479, '图号'], [1537, '名称'], [1610, '型号'], [1662, '材质'], [1699, '数量'], [1736, '单重Kg'], [1773, '总重Kg']];

const lugPath = (cx: number) =>
  `M${cx - 21} 346L${cx - 14} 321C${cx - 9} 307 ${cx + 9} 307 ${cx + 14} 321L${cx + 22} 346M${cx - 21} 377L${cx - 14} 402C${cx - 9} 417 ${cx + 9} 417 ${cx + 14} 402L${cx + 22} 377`;

const heads: [number, string, string][] = [
  [1435, '版次', 'REV.'], [1460, '状 态', 'STATUS'], [1540, '说　　　明', 'DESCRIPTION'], [1625, '编　制', 'PREPARED'],
  [1662, '校　核', 'CHECKED'], [1699, '审　核', 'APPROVED'], [1736, '批　准', 'AUTHORIZED'], [1772, '日期', 'DATE'],
];

function Drawing() {
  return (
    <svg viewBox="835 218 1075 623" className="block w-full flex-1 min-h-0 bg-black [font-family:'Liberation_Sans','Noto_Sans_CJK_SC',sans-serif]" fill="none">
      {/* sheet frame */}
      <g stroke="#ddd">
        <path d="M945 841V219H1801V841M1194 219v9M1393 219v9M1592 219v9M1194 836v5M1393 836v5M1592 836v5M1793 380h8M1793 531h8M1793 682h8" />
        <path d="M963 229v232M979 229v232M945 292h51M945 355h51M945 419h51M963 728v106M979 728v106M945 792h51" />
      </g>
      <rect x="996" y="229" width="795" height="605" stroke="#ff0" strokeWidth="2.500" />
      <path d="M995 229H945v232h50M995 728H945v106h50" stroke="#0cc" strokeWidth="1.500" />
      {[[1095, '4'], [1293, '3'], [1492, '2'], [1692, '1']].map(([x, t]) => (
        <g key={t}><T x={x as number} y={224} c="#0cc">{t}</T><T x={x as number} y={839} c="#0cc">{t}</T></g>
      ))}
      {[[305, 'D'], [456, 'C'], [607, 'B'], [759, 'A']].map(([y, t]) => <T key={t} x={1796} y={y as number} c="#0cc">{t}</T>)}
      <g>
        <T r x={954} y={440} s={8}>专　业</T><T r x={971} y={440} s={8}>签　字</T><T r x={988} y={440} s={8}>日　期</T>
        <T r x={954} y={760} s={8}>制　　图</T><T r x={954} y={813} s={8}>职　责</T><T r x={971} y={813} s={8}>签　字</T><T r x={988} y={813} s={8}>日　期</T>
      </g>

      {/* beam elevation */}
      <g stroke="#eee">
        <path d="M1092 346H1557M1092 377H1557" strokeWidth="1.300" />
        <path d="M1092 348.500H1557M1092 375H1557M1135 346v31M1514 346v31" strokeDasharray="1.500 1" />
        <path d="M1091 343v70M1558 343v70" strokeWidth="2.500" stroke="#bbb" />
        <path d="M1100 332v14M1126 332v14M1100 377v15M1126 377v15M1522 332v14M1549 332v14M1522 377v15M1549 377v15" strokeWidth="2.200" />
        <path d={lugPath(1113)} /><path d={lugPath(1536)} />
        {[1113, 1536].map((x) => <g key={x}><circle cx={x} cy="325" r="5" /><circle cx={x} cy="398" r="5" /></g>)}
        <path d="M1043 317l3 4-3 4M1045 321h18M1057 315v12l6-6zM1063 321l31 25" />
      </g>
      <g stroke={GREEN}>
        <path d="M1090 343V259H1559V343M1113 325V297H1536V325M1076 342h14v4h-14z" />
        <path d="M1100 392v45h27v-45M1113 393v44M1522 392v45h27v-45M1536 393v44" />
        <path d="M1124 331l24-16h4M1325 346l14-20h4M1547 342l14-40h3M1559 371l13-45h3M1547 381l12 7h5" />
      </g>

      {/* side view */}
      <g stroke="#eee">
        <path d="M1665 343h39v70h-8v-31h-23v31h-8zM1681 343v-33h7v33M1681 320h7M1681 330h7M1673 343l5-11h3M1697 343l-5-11h-4" />
        <path d="M1681 383v30h7v-30M1681 393h7M1681 403h7M1673 384l5 8h3M1696 384l-5 8h-3" />
      </g>
      <path d="M1688 310h45v103h-28M1665 414v28h39v-28" stroke={GREEN} />

      {/* part 2 */}
      <path d="M1092 498L1100 473C1104 459 1122 459 1127 473L1135 498V529L1127 554C1122 570 1104 570 1100 554L1092 529z" stroke="#eee" />
      <circle cx="1113" cy="477" r="5" stroke="#eee" /><circle cx="1113" cy="550" r="5" stroke="#eee" />
      <path d="M1092 498V449h43v49M1092 529v50h43v-50M1092 498h-19v31h19M1103 477h70v21h-38M1135 529h38v21h-70M1113 477l20-12M1113 550l20 11" stroke={GREEN} />

      {/* part 4 */}
      <path d="M1211 488h39v71h-8v-30h-22v30h-9z" stroke="#eee" />
      <path d="M1211 488v-18h39v18h18v71h-18M1220 529h-23v30h14M1220 559v28h22v-28M1250 559v19h-8" stroke={GREEN} />

      {/* parts 7 and 8 */}
      <path d="M1302 478h4v14h-9zM1395 471h4l5 3v11h-4z" stroke="#eee" />
      <path d="M1302 478h-20v14h15M1302 478v-18h4v18M1307 489h18v3h-18M1297 492v19h5M1303 492v29h3v-29" stroke={GREEN} />
      <path d="M1395 471h-16v14h21M1395 471v-19h5M1400 471v-27h4v28M1404 471h17v3h-17M1400 485v18h4v-18" stroke={GREEN} />

      {dims.map(([x, y, t, r], i) => <T key={i} x={x} y={y} s={5} c={GREEN} r={r}>{t}</T>)}
      {marks.map(([x, y, t], i) => <T key={i} x={x} y={y} s={5}>{t}</T>)}

      {/* roughness marks */}
      <T x={1710} y={247} a="start" c="#aaa">吊耳孔内表面</T><T x={1740} y={272} c="#aaa">其余</T>
      <T x={1763} y={239}>6.3</T><T x={1759} y={264}>12.6</T>
      <path d="M1774 235l-9 16-4-6h8M1771 260l-9 16-4-7h8" stroke="#eee" />

      <g className="[font-family:'Liberation_Serif','Noto_Sans_CJK_SC',serif]">
        <T x={1010} y={677} a="start" c="#bbb">说明:</T>
        {notes.map(([y, n, t]) => (
          <g key={y}><T x={1010} y={y} a="start" c="#ddd">{n}</T><T x={1021} y={y} a="start" c="#bbb">{t}</T></g>
        ))}
      </g>

      {/* bill of materials */}
      <T x={1420} y={563} s={8} a="start">总重量为:  346.41 kg</T>
      <path d="M1423 571H1791M1423 581.500H1791M1423 592H1791M1423 602H1791M1423 613H1791M1423 623H1791M1423 633.500H1791M1423 644H1791M1423 655H1791M1423 665.500H1791" stroke="#ddd" />
      <path d="M1423.500 571V676M1448 571V676M1509 571V676M1571 571V676M1644 571V676M1680 571V676M1717 571V676M1753 571V676" stroke="#ddd" />
      {bom.map((row, i) =>
        row.map((cell, j) => (
          <T key={`${i}-${j}`} x={bomX[j]} y={577 + i * 10.5} s={j === 1 || j === 2 ? 6 : 7} c={j === 1 || j === 2 ? '#aaa' : '#ddd'} a={[0, 1, 5].includes(j) ? 'middle' : 'start'}>{cell}</T>
        )),
      )}
      {bomHead.map(([x, t]) => <T key={t} x={x} y={671} s={8}>{t}</T>)}

      {/* title block */}
      <path d="M1423 691H1791M1423 705.500H1791M1423 720.500H1791M1423 770.500H1791M1423 796H1791M1423 815H1791" stroke="#ddd" />
      <path d="M1448 676v63M1472.500 676v63M1607 676V815M1644 676V815M1681 676v63M1717 676v63M1754 676v63M1460 770v45M1497 796v19M1533.500 796v19M1571 796v19M1675.500 796v19M1699 796v19M1729.500 796v19M1754 770v26M1775 770v26M1644 815l31-18" stroke="#ddd" />
      <path d="M1790 676H1423.500V834H1790M1423 739.500H1790" stroke="#0dd" strokeWidth="1.300" />
      <path d="M1791 676V834H1424" stroke="#7f8" strokeWidth="2" />
      <T x={1435} y={713} s={6}>0</T><T x={1460} y={713} s={6}>CFC</T><T x={1483} y={713} s={6} a="start">第一次发布</T>
      <g className="[font-family:'Liberation_Serif','Noto_Sans_CJK_SC',serif]">
        {heads.map(([x, zh, en]) => <g key={en}><T x={x} y={727} s={9}>{zh}</T><T x={x} y={735.5} s={en.length === 11 ? 6 : 5}>{en}</T></g>)}
        <T x={1500} y={756} s={10}>易构工作室</T>
        <T x={1625} y={749} s={9}>图　名</T><T x={1625} y={759} s={6}>DRAWING</T><T x={1625} y={766} s={6}>NAME</T>
        <T x={1733} y={756} s={10}>20吨平衡梁制造图</T>
        <T x={1442} y={780} s={9}>项　目</T><T x={1442} y={790} s={6}>PROJECT</T><T x={1504} y={783} s={8}>吊装工程</T>
        <T x={1625} y={778} s={9}>图　号</T><T x={1625} y={786} s={6}>DRAWING</T><T x={1625} y={793} s={6}>NO.</T>
        <T x={1764} y={780} s={9}>版次</T><T x={1764} y={790} s={6}>REV.</T>
        <T x={1442} y={802} s={9}>阶　段</T><T x={1442} y={811} s={6}>STAGE</T>
        <T x={1515} y={802} s={9}>专　业</T><T x={1515} y={811} s={5}>SPECIALITY</T>
        <T x={1625} y={802} s={9}>比例</T><T x={1625} y={811} s={6}>SCALE</T>
        <T x={1687} y={802} s={8}>图幅</T><T x={1687} y={811} s={6}>SIZE</T>
        <T x={1760} y={803} s={9}>第 1 张共 1 张</T><T x={1761} y={811} s={5}>OF</T>
        <T x={1434} y={825} s={8} a="start">本文件版权为易构工作室所有，未经许可不得转给第三者或复制。</T>
      </g>
      <T x={1711} y={782}>DL-20T-001</T><T x={1782} y={785} s={9}>0</T><T x={1716} y={806}>A3</T>
      <T x={1480} y={806} s={8}>制造</T><T x={1552} y={806} s={8}>结构</T>
      <path d="M1574 803.500v5l14 3v-11zM1572 806h17M1590 806h14M1597 799v14" stroke="#eee" /><circle cx="1597" cy="806" r="5" stroke="#eee" /><circle cx="1597" cy="806" r="2.500" stroke="#eee" />
    </svg>
  );
}

const resultText = `计算结果如下:
        1）毛截面屈服39.67Mpa  ≤  215.00Mpa（设计许用值）  满足要求;
        2）净截面断裂44.07Mpa  ≤  259.00Mpa（设计许用值）  满足要求;
        3）最大长细比50.27  ≤  150.00（设计许用值）  满足要求;
        4）稳定应力46.39Mpa  ≤  215.00Mpa（设计许用值）  满足要求;
        5）整体稳定应力184.79Mpa  ≤  215.00Mpa（设计许用值）  满足要求;
        6）壁板宽度b与其厚度t之比16.67  ≤  40.00（设计许用值）  满足要求;`;

function ResultPane() {
  return (
    <section className="flex-1 min-w-0 ml-1 mr-[4px] flex flex-col text-xs leading-4 text-black">
      <div role="tablist" className="h-[21px] pl-[2px] flex items-end border-r border-[#e2e2e2]"><Tab>工况示意</Tab><Tab active>实时绘图</Tab></div>
      <div className="flex-1 min-h-0 flex flex-col border border-b-0 border-[#e2e2e2] pl-[6px] pr-[5px] pt-1"><Drawing /></div>
      <div className="h-[10px] bg-[#f0f0f0]" />
      <div role="tablist" className="h-[21px] flex items-end"><Tab active>主梁计算结果</Tab><Tab>上部吊耳计算结果</Tab></div>
      <div className="border border-[#e2e2e2] pl-[6px] pr-2 pt-[3px] pb-[6px] flex">
        <textarea
          readOnly
          aria-label="计算结果"
          value={resultText}
          className="flex-1 h-[107px] resize-none overflow-hidden border-t-2 border-l-2 border-[#777] bg-[#90ee90] pl-px pt-px leading-4"
        />
        <div className="w-[18px] bg-[#fbfbfb] border-t-2 border-[#777] flex justify-center pt-4"><div className="w-[2px] h-[52px] bg-[#868686]" /></div>
      </div>
      <div className="h-[13px] border-b border-[#e2e2e2]" />
    </section>
  );
}

export default function App() {
  return (
    <div className="h-screen flex flex-col overflow-hidden bg-[#f0f0f0] text-[#111] [font-family:'Open_Sans','Noto_Sans_CJK_SC',sans-serif]">
      <TitleBar />
      <Ribbon />
      <div className="flex-1 min-h-0 flex [font-family:'Liberation_Serif','Noto_Sans_CJK_SC',serif]">
        <Sidebar />
        <main className="flex-1 min-w-0 ml-[8px] flex flex-col">
          <div role="tablist" className="h-6 flex items-end pl-[5px] gap-[2px] text-[13px] font-bold text-[#0078d4] leading-5">
            <div className="flex items-center h-[21px] bg-[#d3d3d3]">
              <button role="tab" className="pl-3">三维模型及图纸</button>
              <button aria-label="关闭" className="w-6 h-full flex items-center justify-center bg-[#c8c8c8] text-black"><X className="size-[9px]" strokeWidth={5} /></button>
            </div>
            <div className="flex items-center h-6 bg-white border-r-2 border-[#777]">
              <button role="tab" aria-selected className="pl-[10px] pr-[14px]">上下同点平衡梁设计</button>
              <button aria-label="关闭" className="pr-[9px] text-black"><X className="size-[9px]" strokeWidth={5} /></button>
            </div>
          </div>
          <div className="flex-1 min-h-0 flex flex-col ml-[2px] mt-[2px] bg-[#f9f9f9] border-t-2 border-l-2 border-[#777]">
            <div className="h-5 flex bg-[#f0f0f0] border-b border-[#e5e5e5] text-xs">
              <button role="tab" aria-selected className="pl-2 pr-4 bg-[#f9f9f9]">上下同点（2点）</button>
            </div>
            <div className="flex-1 min-h-0 flex pl-[6px]"><ParameterForm /><ResultPane /></div>
            <div className="h-[3px] border-t border-[#ddd] bg-white" />
          </div>
          <footer className="h-[26px] flex items-center justify-end text-xs text-[#222] pr-[6px] [font-family:'Open_Sans','Noto_Sans_CJK_SC',sans-serif]">
            <span>提示：双击标题，关闭子窗体</span>
            <svg viewBox="0 0 6 4" className="w-[6px] h-1 ml-12 mr-3"><path d="M0 0h6L3 4z" fill="#333" /></svg>
            <svg viewBox="0 0 20 22" className="w-5 h-[22px] mr-3"><path d="M2 9C2-1 18-1 18 9c0 6-4 5-5 12-4 1-6-1-5-5-4 0-6-3-6-7z" fill="#fff" stroke="#e2e2e2" /></svg>
            <a href="#site" className="text-[#0000ee] underline">吊装助理</a>
          </footer>
        </main>
      </div>
      <div className="h-2 bg-[#2f261a] flex justify-center"><div className="w-10 h-1 mt-1 mr-[700px] rounded-t bg-[#453b2e]" /></div>
    </div>
  );
}
